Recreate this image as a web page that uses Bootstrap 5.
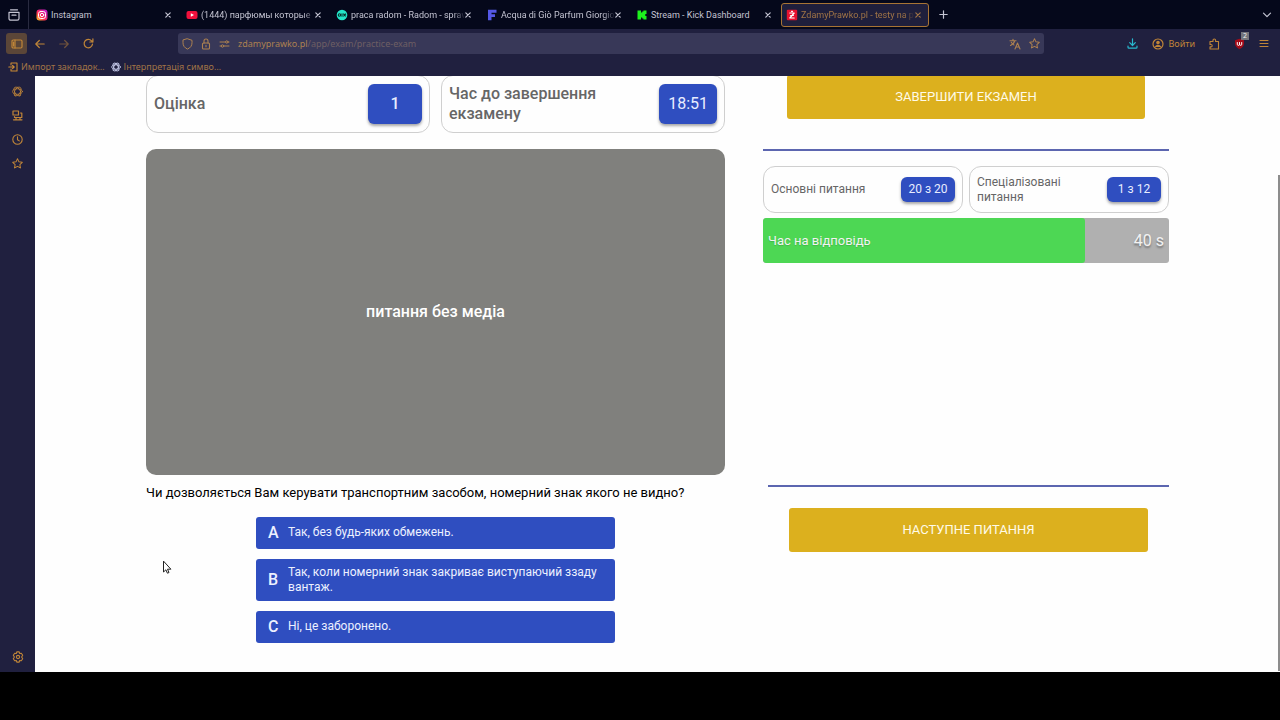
<!DOCTYPE html>
<html lang="uk">
<head>
<meta charset="utf-8">
<meta name="viewport" content="width=device-width, initial-scale=1">
<title>ZdamyPrawko.pl - testy na prawo jazdy</title>
<link href="https://cdn.jsdelivr.net/npm/bootstrap@5.3.0/dist/css/bootstrap.min.css" rel="stylesheet">
<style>
  :root { --amber: #c08538; --amber-text: #a07446; --chrome: #20203f; --blue: #2f4ec0; --gold: #dcb01e; }
  body { font-family: Roboto, "Liberation Sans", sans-serif; background: #000; font-size: 13px; color: #111; }
  button, a { font-family: inherit; }
  svg { display: block; flex: none; stroke-linecap: round; stroke-linejoin: round; }
  svg:not([fill]) { fill: none; }
  svg:not([stroke]) { stroke: currentColor; }
  svg:not([stroke-width]) { stroke-width: 1.2; }
  .ui-font { font-family: "Noto Sans", "Open Sans", sans-serif; font-size: 9px; line-height: 14px; }
  .icon-btn { border: 0; background: none; padding: 0; color: inherit; display: flex; align-items: center; justify-content: center; }

  .tab-strip { height: 29px; background: #05081b; color: #c4c4d2; }
  .tab-tools { width: 29px; border-right: 1px solid #292b40; }
  .tab-list { gap: 2px; padding-left: 2px; }
  .tab-item { flex: 0 1 148px; min-width: 0; height: 24px; padding: 0 7px 0 4px; border: 1px solid transparent; border-radius: 3px; }
  .tab-item > svg { margin-right: 3px; }
  .tab-item.current { background: #1f1f3c; border-color: #a87434; color: var(--amber-text); }
  .tab-label { font-family: Roboto, sans-serif; flex: 1 1 0; min-width: 0; overflow: hidden; white-space: nowrap; color: inherit; text-decoration: none; }
  .tab-label.fading { -webkit-mask-image: linear-gradient(to right, #000 90%, transparent); mask-image: linear-gradient(to right, #000 90%, transparent); }
  .tool-bar { height: 29px; background: var(--chrome); color: var(--amber); }
  .nav-tools { width: 98px; padding-left: 6px; gap: 14px; }
  .right-tools { padding-right: 11px; gap: 14px; }
  .side-toggle { width: 21px; height: 21px; border-radius: 3px; background: #5b4638; }
  .address { height: 21px; border-radius: 3px; background: #383858; margin: 0 83px 0 80px; color: #ad8150; }
  .address .dim { color: #6e5f64; }
  .bookmarks { height: 18px; gap: 6px; background: var(--chrome); color: var(--amber-text); }
  .bookmarks a { gap: 3px; color: inherit; text-decoration: none; }
  .counter { top: -6px; right: -4px; background: #74747c; color: #eee; font-size: 7px; line-height: 8px; padding: 0 2px; }

  .side-bar { width: 35px; background: var(--chrome); color: var(--amber); padding: 7px 0; gap: 8px; }
  .side-bar .icon-btn { width: 35px; height: 16px; }
  .viewport { background: #fefefe; overflow: hidden; }
  .scroll-thumb { width: 2px; top: 99px; bottom: 1px; right: 0; background: #8d8d8d; }
  .exam { display: grid; grid-template-columns: minmax(0, 579fr) minmax(0, 406fr); column-gap: 38px; padding: 0 111px 29px; margin-top: -1px; }
  .panels { display: grid; gap: 11px; grid-template-columns: 1fr 1fr; }
  .panels.tight { gap: 6px; }
  .stat { border: 1px solid #cfcfcf; border-radius: 12px; padding: 7px; color: #666; font-size: 16px; font-weight: 500; line-height: 20px; min-height: 58px; }
  .stat .value { background: var(--blue); color: #e8edff; border-radius: 6px; min-width: 54px; padding: 10px 9px; text-align: center; box-shadow: 0 2px 3px rgba(0,0,0,.35); flex: none; }
  .panels.tight .stat { font-size: 12px; font-weight: 400; line-height: 15px; min-height: 47px; }
  .panels.tight .value { padding: 5px 6px; }
  .media-box { aspect-ratio: 16 / 9; background: #80807d; border-radius: 10px; color: #fff; font-size: 16px; font-weight: 500; }
  .question { line-height: 20px; margin: 8px 0 14px; color: #000; }
  .answers { width: 62%; gap: 10px; }
  .answer { background: var(--blue); border: 0; border-radius: 3px; color: #edf1ff; font-size: 12px; line-height: 15px; padding: 6px 12px; min-height: 32px; gap: 9px; text-align: left; }
  .answer b { font-size: 16px; font-weight: 500; width: 11px; line-height: 20px; flex: none; }
  .rule { height: 2px; background: #5c66b0; border: 0; opacity: 1; margin: 0; }
  .gold-btn { display: block; width: 100%; height: 44px; background: var(--gold); color: #fffbe8; border: 0; border-radius: 3px; }
  .next-row { padding: 0 21px 0 26px; }
  .timer { height: 45px; background: #b0b0b0; border-radius: 3px; color: #f2f2f2; margin-top: 5px; overflow: hidden; }
  .timer-fill { background: #4dd754; border-radius: 3px; }
  .timer-text { padding: 0 5px; text-shadow: 0 1px 1px rgba(0,0,0,.15); }
  .timer-text output { font-size: 16px; text-shadow: 0 2px 2px rgba(0,0,0,.35); }
  .pointer { left: 127px; top: 484px; }
  .bottom-band { height: 48px; background: #000; }
</style>
</head>
<body class="d-flex flex-column min-vh-100">

<header class="ui-font">
  <nav class="tab-strip d-flex align-items-center" aria-label="Вкладки">
    <div class="tab-tools h-100 d-flex align-items-center justify-content-center">
      <button class="icon-btn" aria-label="Обзор"><svg width="12" height="12" viewBox="0 0 12 12"><path d="M2.500.8h7M1 3.300h10v6.200a1.700 1.700 0 0 1-1.700 1.700H2.700A1.700 1.700 0 0 1 1 9.500zM4 6.200h4"/></svg></button>
    </div>
    <div class="tab-list d-flex flex-grow-1">
      <div class="tab-item d-flex align-items-center"><svg width="12" height="12" viewBox="0 0 12 12" stroke="#fff"><defs><linearGradient id="ig" x1="0" y1="1" x2="1" y2="0"><stop offset="0" stop-color="#ffd21c"/><stop offset=".4" stop-color="#ff2c55"/><stop offset="1" stop-color="#b817e0"/></linearGradient></defs><rect x=".5" y=".5" width="11" height="11" rx="3" fill="url(#ig)" stroke="none"/><rect x="2.500" y="2.500" width="7" height="7" rx="2.200" stroke-width="1"/><circle cx="6" cy="6" r="1.700" stroke-width="1"/></svg><a class="tab-label" href="#">Instagram</a><button class="icon-btn" aria-label="Закрыть"><svg width="6" height="6" viewBox="0 0 6 6"><path d="M.8.8l4.400 4.400M5.200.8L.8 5.200"/></svg></button></div>
      <div class="tab-item d-flex align-items-center"><svg width="12" height="12" viewBox="0 0 12 12" stroke="none"><rect x=".5" y="2" width="11" height="8" rx="2" fill="#f0103c"/><path d="M4.800 4.200v3.600L8 6z" fill="#fff"/></svg><a class="tab-label fading" href="#">(1444) парфюмы которые</a><button class="icon-btn" aria-label="Закрыть"><svg width="6" height="6" viewBox="0 0 6 6"><path d="M.8.8l4.400 4.400M5.200.8L.8 5.200"/></svg></button></div>
      <div class="tab-item d-flex align-items-center"><svg width="12" height="12" viewBox="0 0 12 12" stroke="#06322f" stroke-width="1.100"><circle cx="6" cy="6" r="5.300" fill="#23e5c8" stroke="none"/><circle cx="3.500" cy="6" r="1.200"/><path d="M6 4.700v2.600M7.600 5l2 2M9.600 5l-2 2"/></svg><a class="tab-label fading" href="#">praca radom - Radom - spraw</a><button class="icon-btn" aria-label="Закрыть"><svg width="6" height="6" viewBox="0 0 6 6"><path d="M.8.8l4.400 4.400M5.200.8L.8 5.200"/></svg></button></div>
      <div class="tab-item d-flex align-items-center"><svg width="12" height="12" viewBox="0 0 12 12" stroke="none" fill="#5558e6"><path d="M2 .8h8.500v3H5.500v1.500H9v2.700H5.500v3.200H2z"/></svg><a class="tab-label fading" href="#">Acqua di Giò Parfum Giorgio</a><button class="icon-btn" aria-label="Закрыть"><svg width="6" height="6" viewBox="0 0 6 6"><path d="M.8.8l4.400 4.400M5.200.8L.8 5.200"/></svg></button></div>
      <div class="tab-item d-flex align-items-center"><svg width="12" height="12" viewBox="0 0 12 12" stroke="none" fill="#1df21d"><path d="M1.500 1.500H5v2h1.200v-1h1.200v-1H10.500V5H9.300v2h1.200v3.500H7.400v-1H6.200v-1H5v2H1.500z"/></svg><a class="tab-label" href="#">Stream - Kick Dashboard</a><button class="icon-btn" aria-label="Закрыть"><svg width="6" height="6" viewBox="0 0 6 6"><path d="M.8.8l4.400 4.400M5.200.8L.8 5.200"/></svg></button></div>
      <div class="tab-item current d-flex align-items-center"><svg width="12" height="12" viewBox="0 0 12 12" stroke="#fff"><rect x=".8" y=".8" width="10.400" height="10.400" rx="1" fill="#e8102f" stroke="none"/><path d="M3.800 4h4.400L3.800 9h4.400M4.600 6.500h2.800M5.500 2.300h1"/></svg><a class="tab-label fading" href="#" aria-current="page">ZdamyPrawko.pl - testy na p</a><button class="icon-btn" aria-label="Закрыть"><svg width="6" height="6" viewBox="0 0 6 6"><path d="M.8.8l4.400 4.400M5.200.8L.8 5.200"/></svg></button></div>
      <button class="icon-btn ms-2" aria-label="Новая вкладка"><svg width="9" height="9" viewBox="0 0 9 9"><path d="M4.500.8v7.400M.8 4.500h7.400"/></svg></button>
    </div>
    <button class="icon-btn me-2" aria-label="Все вкладки"><svg width="10" height="8" viewBox="0 0 10 8"><path d="M1.500 2.200L5 5.700l3.500-3.500"/></svg></button>
  </nav>

  <div class="tool-bar d-flex align-items-center">
    <div class="nav-tools d-flex align-items-center">
      <div class="d-flex align-items-center gap-2">
        <button class="icon-btn side-toggle" aria-label="Боковая панель"><svg width="12" height="10" viewBox="0 0 12 10"><rect x="1" y="1" width="10" height="8" rx="1.200"/><path d="M4 1v8M2.500 3v4"/></svg></button>
        <button class="icon-btn" aria-label="Назад"><svg width="10" height="10" viewBox="0 0 10 10"><path d="M9.200 5H.8M4.300 1.500L.8 5l3.500 3.500"/></svg></button>
      </div>
      <button class="icon-btn opacity-50" aria-label="Вперёд"><svg width="10" height="10" viewBox="0 0 10 10"><path d="M.8 5h8.400M5.700 1.500L9.200 5 5.700 8.500"/></svg></button>
      <button class="icon-btn" aria-label="Обновить"><svg width="11" height="11" viewBox="0 0 11 11"><path d="M9.500 6.200A4.200 4.200 0 1 1 8.500 2.800L9.800 4M9.900.8V4H6.800"/></svg></button>
    </div>
    <div class="address flex-grow-1 d-flex align-items-center">
      <svg class="ms-1" width="11" height="12" viewBox="0 0 11 12" stroke-width="1"><path d="M5.500.8L10 2.300v2.500c0 2.900-1.500 4.900-4.500 6.300C2.500 9.700 1 7.700 1 4.800V2.300z"/></svg>
      <svg class="ms-2" width="10" height="12" viewBox="0 0 10 12" stroke-width="1.100"><rect x="1.500" y="5" width="7" height="6" rx="1"/><path d="M3 5V3a2 2 0 0 1 4 0v2M5 7.300v1.400"/></svg>
      <svg class="ms-2 me-2" width="11" height="10" viewBox="0 0 11 10" stroke-width="1"><path d="M1 3h5.500M9 3h1M1 7h1M5 7h5"/><circle cx="7.800" cy="3" r="1.200"/><circle cx="3.500" cy="7" r="1.200"/></svg>
      <a class="text-reset text-decoration-none flex-grow-1" href="#">zdamyprawko.pl<span class="dim">/app/exam/practice-exam</span></a>
      <button class="icon-btn" aria-label="Перевести"><svg width="12" height="12" viewBox="0 0 12 12" stroke-width="1.100"><path d="M1 2.700h6M4 1.200v1.500M1.500 7.500c2.500-1 3.800-2.700 4.200-4.800M2.300 4.300C3 5.600 3.800 6.400 5 7M6 11l2.500-6L11 11M6.900 9h3.200"/></svg></button>
      <button class="icon-btn ms-2 me-1" aria-label="Добавить в закладки"><svg width="11" height="11" viewBox="0 0 12 12" stroke-width="1.100"><path d="M6 .9l1.600 3.300 3.600.5-2.600 2.500.6 3.600L6 9.100l-3.200 1.700.6-3.600L.8 4.700l3.600-.5z"/></svg></button>
    </div>
    <div class="right-tools d-flex align-items-center">
      <button class="icon-btn" aria-label="Загрузки" style="color:#28b9cf"><svg width="11" height="11" viewBox="0 0 11 11"><path d="M5.500.8v6.500M2.700 4.700l2.800 2.800 2.800-2.800M1 8v1.200a1 1 0 0 0 1 1h7a1 1 0 0 0 1-1V8"/></svg></button>
      <button class="icon-btn gap-1"><svg width="12" height="12" viewBox="0 0 12 12"><circle cx="6" cy="6" r="5"/><circle cx="6" cy="4.600" r="1.200" fill="#c08538"/><path d="M3.600 8.500c.8-1.300 4-1.300 4.800 0z" fill="#c08538"/></svg>Войти</button>
      <button class="icon-btn" aria-label="Расширения"><svg width="11" height="12" viewBox="0 0 11 12" stroke-width="1.100"><path d="M1 3.500h3V2.300a1.300 1.300 0 0 1 2.600 0v1.200H9.500V11H1V8.900h1a1.200 1.200 0 0 0 0-2.400H1z"/></svg></button>
      <button class="icon-btn position-relative" aria-label="uBlock"><svg width="11" height="12" viewBox="0 0 11 12" stroke="#fff" stroke-width="1"><path d="M5.500.8L10 2.300v3c0 2.800-1.600 4.600-4.500 6C2.600 9.900 1 8.100 1 5.300v-3z" fill="#a30b19" stroke="none"/><path d="M3.300 4.500v1.800a1.100 1.100 0 0 0 2.200 0V4.500M5.500 6.300a1.100 1.100 0 0 0 2.200 0V4.500"/></svg><span class="counter position-absolute">2</span></button>
      <button class="icon-btn" aria-label="Меню"><svg width="10" height="9" viewBox="0 0 10 9" stroke-width="1"><path d="M1 1.500h8M1 4.500h8M1 7.500h8"/></svg></button>
    </div>
  </div>

  <div class="bookmarks d-flex align-items-center ps-2">
    <a class="d-flex align-items-center" href="#"><svg width="10" height="10" viewBox="0 0 10 10" stroke="#c98a35" stroke-width="1.100"><path d="M3 3V1h6v8H3V7M.8 5H6M4.500 3.300L6.200 5 4.500 6.700"/></svg>Импорт закладок…</a>
    <a class="d-flex align-items-center" href="#"><svg width="10" height="10" viewBox="0 0 10 10" stroke="#c4c8e8" stroke-width=".9"><ellipse cx="5" cy="5" rx="4.300" ry="2.200"/><ellipse cx="5" cy="5" rx="4.300" ry="2.200" transform="rotate(60 5 5)"/><ellipse cx="5" cy="5" rx="4.300" ry="2.200" transform="rotate(120 5 5)"/></svg>Інтерпретація симво…</a>
  </div>
</header>

<div class="d-flex flex-grow-1">
  <aside class="side-bar d-flex flex-column flex-shrink-0">
    <button class="icon-btn" aria-label="ChatGPT"><svg width="11" height="11" viewBox="0 0 10 10" stroke-width=".7"><ellipse cx="5" cy="5" rx="4.500" ry="2.500"/><ellipse cx="5" cy="5" rx="4.500" ry="2.500" transform="rotate(60 5 5)"/><ellipse cx="5" cy="5" rx="4.500" ry="2.500" transform="rotate(120 5 5)"/></svg></button>
    <button class="icon-btn" aria-label="Вкладки с других устройств"><svg width="11" height="11" viewBox="0 0 11 11" stroke-width="1.200"><path d="M1 1h5.500v4H1zM8.500 3h1.300v4.500H2.500V6.500M1.500 9.800h8.500M4 7.500v2M8 7.500v2"/></svg></button>
    <button class="icon-btn" aria-label="История"><svg width="11" height="11" viewBox="0 0 11 11" stroke-width="1.100"><circle cx="5.500" cy="5.500" r="4.700"/><path d="M5.500 2.700v3l1.800 1.200"/></svg></button>
    <button class="icon-btn" aria-label="Закладки"><svg width="11" height="11" viewBox="0 0 12 12" stroke-width="1.100"><path d="M6 .9l1.600 3.300 3.600.5-2.600 2.500.6 3.600L6 9.100l-3.200 1.700.6-3.600L.8 4.700l3.600-.5z"/></svg></button>
    <button class="icon-btn mt-auto" aria-label="Настройки"><svg width="12" height="12" viewBox="0 0 12 12" stroke-width="1.100"><path d="M4.800.9h2.400l.5 1.600 1.600-.3 1.400 2-1.100 1.800 1.100 1.800-1.400 2-1.600-.3-.5 1.600H4.800l-.5-1.600-1.600.3-1.400-2L2.400 6 1.300 4.200l1.400-2 1.600.3z"/><circle cx="6" cy="6" r="1.600"/></svg></button>
  </aside>

  <main class="viewport position-relative flex-grow-1">
    <div class="exam">
      <section>
        <div class="panels mb-3">
          <div class="stat d-flex align-items-center justify-content-between"><span>Оцінка</span><span class="value">1</span></div>
          <div class="stat d-flex align-items-center justify-content-between"><span>Час до завершення екзамену</span><span class="value fw-normal">18:51</span></div>
        </div>
        <div class="media-box d-flex align-items-center justify-content-center">питання без медіа</div>
        <p class="question">Чи дозволяється Вам керувати транспортним засобом, номерний знак якого не видно?</p>
        <div class="answers d-flex flex-column mx-auto">
          <button class="answer d-flex align-items-center"><b>A</b><span>Так, без будь-яких обмежень.</span></button>
          <button class="answer d-flex align-items-center"><b>B</b><span>Так, коли номерний знак закриває виступаючий ззаду вантаж.</span></button>
          <button class="answer d-flex align-items-center"><b>C</b><span>Ні, це заборонено.</span></button>
        </div>
      </section>

      <section>
        <div class="px-4"><button class="gold-btn">ЗАВЕРШИТИ ЕКЗАМЕН</button></div>
        <hr class="rule" style="margin:30px 0 15px">
        <div class="panels tight">
          <div class="stat d-flex align-items-center justify-content-between"><span>Основні питання</span><span class="value">20 з 20</span></div>
          <div class="stat d-flex align-items-center justify-content-between"><span>Спеціалізовані питання</span><span class="value">1 з 12</span></div>
        </div>
        <div class="timer position-relative">
          <div class="timer-fill h-100" style="width:79.4%"></div>
          <div class="timer-text position-absolute top-0 start-0 w-100 h-100 d-flex align-items-center justify-content-between"><span>Час на відповідь</span><output>40 s</output></div>
        </div>
        <hr class="rule" style="margin:222px 0 21px 5px">
        <div class="next-row"><button class="gold-btn">НАСТУПНЕ ПИТАННЯ</button></div>
      </section>
    </div>
    <svg class="pointer position-absolute" width="10" height="15" viewBox="0 0 10 15"><path d="M1.500 1.500v10.500l2.400-2.200 1.500 3.400 1.600-.7-1.500-3.300h3z" fill="#fff" stroke="#222" stroke-width="1"/></svg>
    <div class="scroll-thumb position-absolute"></div>
  </main>
</div>
<footer class="bottom-band"></footer>

<script src="https://cdn.jsdelivr.net/npm/bootstrap@5.3.0/dist/js/bootstrap.bundle.min.js"></script>
</body>
</html>
